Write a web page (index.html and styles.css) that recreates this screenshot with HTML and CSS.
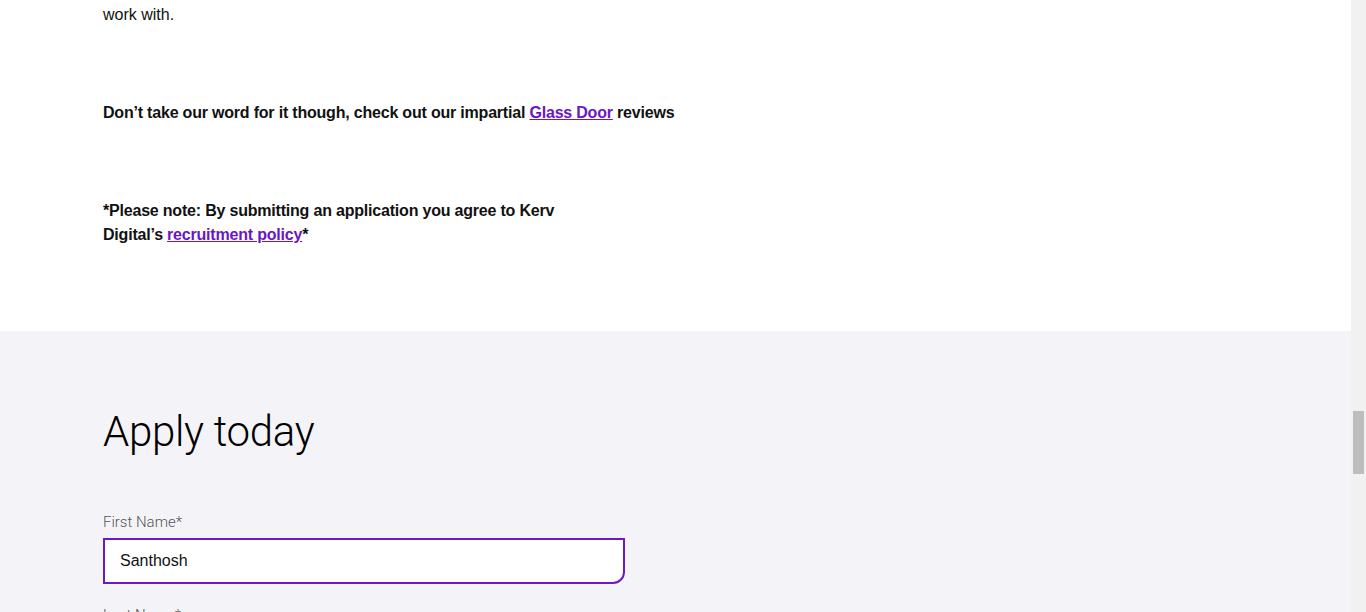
FILE: index.html
```html
<!DOCTYPE html>
<html lang="en">
<head>
<meta charset="utf-8">
<title>Apply today</title>
<link rel="stylesheet" href="styles.css">
</head>
<body>
<div class="page">
  <section class="content">
    <div class="wrap">
      <p class="tail">work with.</p>
      <p class="strong spaced-1">Don’t take our word for it though, check out our impartial <a href="#">Glass Door</a> reviews</p>
      <p class="strong note">*Please note: By submitting an application you agree to Kerv Digital’s <a href="#">recruitment policy</a>*</p>
    </div>
  </section>
  <section class="apply">
    <div class="wrap">
      <h2 class="title">Apply today</h2>
      <form class="form">
        <label class="field">
          <span class="label">First Name*</span>
          <input class="input" type="text" value="Santhosh">
        </label>
        <label class="field">
          <span class="label">Last Name*</span>
          <input class="input" type="text" value="">
        </label>
      </form>
    </div>
  </section>
</div>
<div class="scrollbar"><div class="thumb"></div></div>
</body>
</html>
```
FILE: styles.css
```css
html, body {
  margin: 0;
  padding: 0;
  overflow: hidden;
  height: 612px;
}
body {
  font-family: "Liberation Sans", Arial, sans-serif;
  color: #111;
  background: #fff;
}
.page {
  width: 1351px;
}
.wrap {
  padding-left: 103px;
}
.content {
  background: #fff;
  height: 334px;
  margin-top: -3px;
}
.content p {
  margin: 0;
  font-size: 16px;
  line-height: 24px;
}
.tail {
  padding-top: 6px;
}
.strong {
  font-weight: 700;
  letter-spacing: -0.2px;
}
.spaced-1 {
  margin-top: 74px !important;
}
.note {
  margin-top: 74px !important;
  width: 470px;
}
a {
  color: #6b16c4;
  text-decoration: underline;
}
.apply {
  background: #f4f4f8;
  padding-top: 77px;
  height: 400px;
}
.title {
  margin: 0;
  font-family: Roboto, "Liberation Sans", Arial, sans-serif;
  font-weight: 300;
  font-size: 42px;
  line-height: 48px;
  letter-spacing: -0.3px;
  color: #000;
}
.form {
  margin-top: 57px;
  width: 522px;
  display: flex;
  flex-direction: column;
  gap: 22px;
}
.field {
  display: flex;
  flex-direction: column;
  gap: 7px;
}
.label {
  font-family: Roboto, "Liberation Sans", Arial, sans-serif;
  font-weight: 300;
  font-size: 15px;
  line-height: 18px;
  color: #555;
}
.input {
  box-sizing: border-box;
  height: 46px;
  width: 522px;
  border: 2px solid #6d17c6;
  border-radius: 0 0 12px 0;
  background: #fff;
  padding: 0 15px;
  font-family: "Liberation Sans", Arial, sans-serif;
  font-size: 16px;
  color: #111;
  outline: none;
}
.scrollbar {
  position: fixed;
  top: 0;
  right: 0;
  width: 15px;
  height: 612px;
  background: #f1f1f1;
}
.thumb {
  margin: 411px 0 0 2px;
  width: 11px;
  height: 63px;
  background: #bdbdbd;
}
```
